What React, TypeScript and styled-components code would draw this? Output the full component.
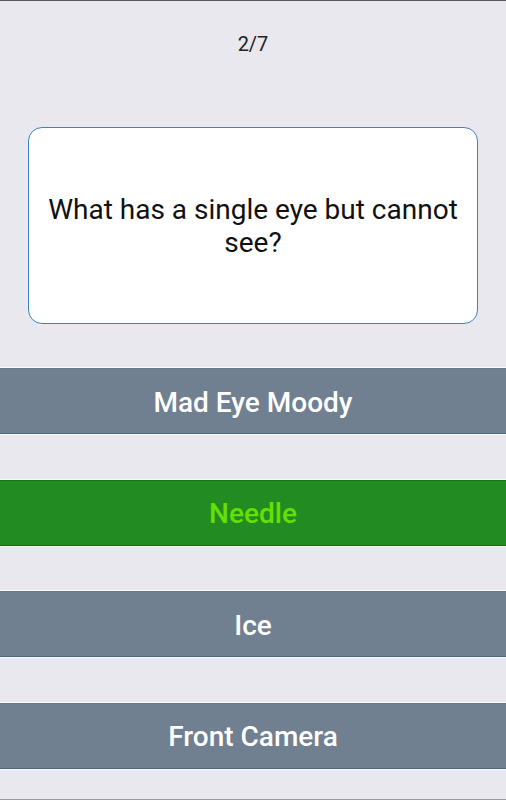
import React from 'react'
import styled, { createGlobalStyle } from 'styled-components'

const GlobalStyle = createGlobalStyle`
  html, body {
    margin: 0;
    padding: 0;
    background: #e9e8ee;
    font-family: Roboto, 'Noto Sans', sans-serif;
  }
`

const Screen = styled.div`
  width: 506px;
  height: 800px;
  box-sizing: border-box;
  border-top: 1px solid #5a5a5a;
  border-bottom: 1px solid #9a9a9e;
  background: #e9e8ee;
  display: flex;
  flex-direction: column;
`

const Counter = styled.div`
  margin-top: 31px;
  height: 24px;
  text-align: center;
  font-size: 20px;
  line-height: 24px;
  color: #222;
`

const QuestionCard = styled.div`
  margin: 71px 28px 0;
  height: 197px;
  box-sizing: border-box;
  background: #fff;
  border: 1px solid #3f82c0;
  border-radius: 14px;
  display: flex;
  align-items: center;
  justify-content: center;
  padding: 0 14px;
  text-align: center;
  font-size: 28px;
  line-height: 33px;
  color: #111;
`

const Answers = styled.div`
  margin-top: 44px;
  display: flex;
  flex-direction: column;
  gap: 45.5px;
`

const AnswerButton = styled.button<{ $correct?: boolean }>`
  height: 66px;
  width: 100%;
  margin: 0;
  padding: 2px 0 0;
  border: none;
  border-top: 1px solid ${({ $correct }) => ($correct ? '#157a15' : '#66788a')};
  border-bottom: 1px solid ${({ $correct }) => ($correct ? '#147014' : '#4d6680')};
  box-shadow: 0 -1px 0 #fbfbfd, 0 1px 0 #fbfbfd;
  background: ${({ $correct }) => ($correct ? '#228b22' : '#708090')};
  color: ${({ $correct }) => ($correct ? '#66e000' : '#ffffff')};
  font-family: Roboto, 'Noto Sans', sans-serif;
  font-size: 28px;
  font-weight: 500;
  text-align: center;
`

const answers = [
  { text: 'Mad Eye Moody' },
  { text: 'Needle', correct: true },
  { text: 'Ice' },
  { text: 'Front Camera' },
]

export default function App() {
  return (
    <>
      <GlobalStyle />
      <Screen>
        <Counter>2/7</Counter>
        <QuestionCard>What has a single eye but cannot see?</QuestionCard>
        <Answers>
          {answers.map((a) => (
            <AnswerButton key={a.text} $correct={a.correct}>
              {a.text}
            </AnswerButton>
          ))}
        </Answers>
      </Screen>
    </>
  )
}
